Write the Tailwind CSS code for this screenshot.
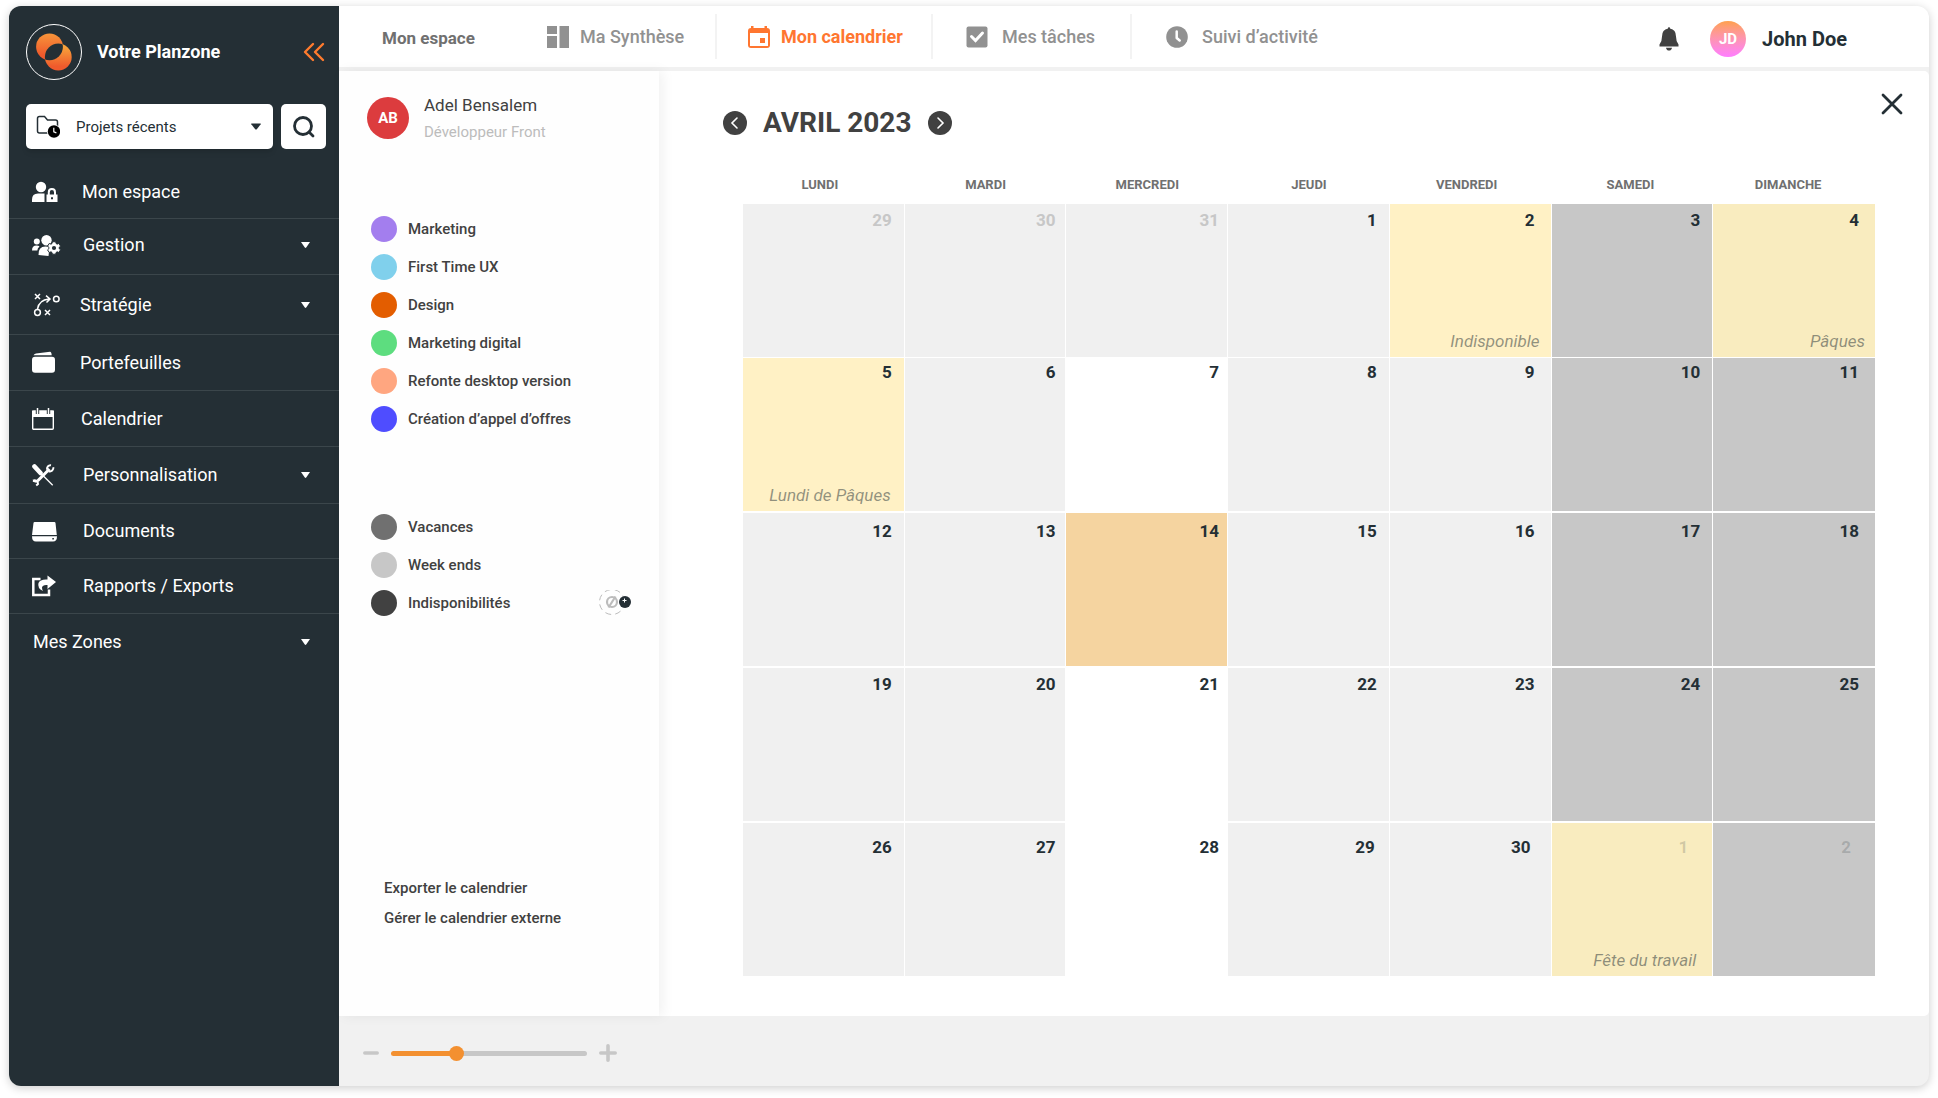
<!DOCTYPE html>
<html lang="fr">
<head>
<meta charset="utf-8">
<title>Mon calendrier – Planzone</title>
<script src="https://cdn.jsdelivr.net/npm/@tailwindcss/browser@4"></script>
</head>
<body class="bg-white font-['Roboto','Noto_Sans',sans-serif] text-[17px] leading-6 text-[#242f35]">
<div class="min-h-screen px-[9px] pt-[6px] pb-3 flex">
<div class="flex-1 flex rounded-xl overflow-hidden bg-[#f1f1f1] shadow-[0_2px_10px_rgba(0,0,0,0.2)]">

  <!-- Sidebar -->
  <aside class="w-[330px] shrink-0 bg-[#242f35] text-white text-[18px]">
    <div class="flex items-center pl-[17px] pr-[14px] pt-[18px]">
      <svg class="size-14" viewBox="0 0 56 56" role="img" aria-label="Planzone">
        <defs>
          <linearGradient id="g1" x1="0" y1="0" x2="0" y2="1"><stop offset="0" stop-color="#f7953a"/><stop offset=".8" stop-color="#ef5a2c"/></linearGradient>
          <linearGradient id="g2" x1="0" y1="0" x2="0" y2="1"><stop offset=".15" stop-color="#f7a03a"/><stop offset=".85" stop-color="#ef5a2c"/></linearGradient>
          <clipPath id="lens"><circle cx="23.5" cy="22.8" r="13.4"/></clipPath>
        </defs>
        <circle cx="28" cy="28" r="27.5" fill="none" stroke="#fff"/>
        <circle cx="23.5" cy="22.8" r="13.4" fill="url(#g1)"/>
        <circle cx="32.3" cy="33" r="13.4" fill="url(#g2)"/>
        <circle cx="32.3" cy="33" r="13.4" fill="#242f35" clip-path="url(#lens)"/>
      </svg>
      <span class="ml-[15px] font-bold flex-1">Votre Planzone</span>
      <button aria-label="Réduire le menu"><svg class="w-[22px] h-5" viewBox="0 0 22 20" fill="none" stroke="#ff7b2e" stroke-width="2.4" stroke-linecap="round" stroke-linejoin="round"><path d="M10 2 2 10l8 8M20 2l-8 8 8 8"/></svg></button>
    </div>
    <div class="flex gap-2 pl-[17px] pr-[13px] mt-6">
      <div class="flex-1 grid items-center bg-white rounded-[5px] h-[45px] shadow-md text-[#242f35]">
        <select aria-label="Projets" class="col-start-1 row-start-1 w-full h-full appearance-none bg-transparent pl-[50px] pr-8 text-[15px]"><option>Projets récents</option></select>
        <svg class="col-start-1 row-start-1 ml-[10px] w-6 h-6 pointer-events-none" viewBox="0 0 24 24"><path d="M1.500 3.500Q1.500 1.500 3.500 1.500H8.500L11.500 5H19.500Q21.500 5 21.500 7V18H3.500Q1.500 18 1.500 16Z" fill="none" stroke="#242f35" stroke-width="1.500"/><circle cx="18" cy="16.500" r="7" fill="#fff"/><circle cx="18" cy="16.500" r="6.200" fill="#000"/><path d="M17.800 12.700v4.200l2.600 1" fill="none" stroke="#fff" stroke-width="1.200"/></svg>
        <svg class="col-start-1 row-start-1 justify-self-end mr-3 w-[10px] h-[7px] pointer-events-none" viewBox="0 0 10 7"><path d="M.6.5h8.800q.7 0 .3.700L6 6q-1 1-2 0L.3 1.200Q-.1.500.6.500z" fill="#242f35"/></svg>
      </div>
      <button aria-label="Rechercher" class="size-[45px] bg-white rounded-[5px] grid place-items-center"><svg class="size-[22px]" viewBox="0 0 22 22" fill="none" stroke="#242f35" stroke-width="2.8" stroke-linecap="round"><circle cx="10" cy="10" r="8.500"/><path d="m16 16 4 4"/></svg></button>
    </div>
    <nav class="mt-4" aria-label="Menu principal">
      <a href="#" class="flex items-center h-[54px] pl-[23px] border-b border-[#3b464b]">
        <svg class="w-7 h-6 mr-[22px]" viewBox="0 0 28 24" fill="#fff"><circle cx="9" cy="7" r="5.200"/><path d="M0 22v-2.500Q0 13.500 6 13.500h6.500v8.500z"/><path fill-rule="evenodd" d="M14.500 14.500h1.300v-2.300a4.100 4.100 0 0 1 8.200 0v2.300h1.500v7.500h-11zM17.800 14.500h4.200v-2.300a2.100 2.100 0 0 0-4.200 0zM19 17.200v2h2v-2z"/></svg>Mon espace</a>
      <button class="flex items-center w-full h-14 pl-[23px] pr-[29px] pb-1 border-b border-[#3b464b]">
        <svg class="w-[29px] h-6 mr-[22px]" viewBox="0 0 29 24" fill="#fff"><circle cx="4.800" cy="8.500" r="3"/><circle cx="14.500" cy="7.200" r="5.200"/><path d="M0 17.500q0-5 4.500-5 2 0 3 1-2 1.500-2.200 4zM6.500 22q-.5-8.300 7-8.500l4 .5-1 9z"/><path d="M20.500 7.500h4l.5 2.200 1.200.7 2.200-.8 2 3.200-1.700 1.600v1.400l1.700 1.600-2 3.200-2.200-.8-1.200.8-.5 2.100h-4l-.5-2.100-1.200-.8-2.200.8-2-3.200 1.700-1.600v-1.400l-1.700-1.600 2-3.200 2.200.8 1.200-.7z" transform="translate(3.600 2.600) scale(.82)" stroke="#242f35" stroke-width="1.200"/><circle cx="22" cy="15" r="2.100" fill="#242f35"/></svg>Gestion
        <svg class="ml-auto w-[9px] h-[6px]" viewBox="0 0 9 6" fill="#fff"><path d="M0 0h9L5.200 5.500q-.7.800-1.400 0z"/></svg></button>
      <button class="flex items-center w-full h-[60px] pl-[23px] pr-[29px] border-b border-[#3b464b]">
        <svg class="w-7 h-6 mr-5" viewBox="0 0 28 24" fill="none" stroke="#fff" stroke-width="1.500"><path d="m3 1 5 5M8 1 3 6M13 17l5 5M18 17l-5 5M5.500 16Q7 7 17 6M14 2.700l4 3.300-3.500 3.500"/><circle cx="24.300" cy="6" r="2.800"/><circle cx="5.500" cy="19.500" r="2.900"/></svg>Stratégie
        <svg class="ml-auto w-[9px] h-[6px]" viewBox="0 0 9 6" fill="#fff"><path d="M0 0h9L5.200 5.500q-.7.800-1.400 0z"/></svg></button>
      <a href="#" class="flex items-center h-14 pl-[23px] border-b border-[#3b464b]">
        <svg class="w-7 h-6 mr-5" viewBox="0 0 28 24" fill="#fff"><rect x="0" y="5.700" width="23" height="16" rx="3"/><path d="M1.500 4.300Q2 3 4 2.600L18 .7q1.500 0 1.700 3.600z"/></svg>Portefeuilles</a>
      <a href="#" class="flex items-center h-14 pl-[23px] border-b border-[#3b464b]">
        <svg class="w-7 h-6 mr-[21px]" viewBox="0 0 28 24"><rect x=".7" y="4.200" width="20.600" height="18" rx="1" fill="none" stroke="#fff" stroke-width="1.400"/><path d="M0 3.500h22v6.500H0z" fill="#fff"/><path d="M5.500 1v6M16.500 1v6" stroke="#242f35" stroke-width="3.400"/><path d="M5.500 1v6M16.500 1v6" stroke="#fff" stroke-width="1.500"/></svg>Calendrier</a>
      <button class="flex items-center w-full h-[57px] pl-[23px] pr-[29px] border-b border-[#3b464b]">
        <svg class="w-7 h-6 mr-[23px]" viewBox="0 0 28 24" fill="none" stroke="#fff"><path d="m2.500 3.500 6 6.500" stroke-width="4.600" stroke-linecap="round"/><path d="m8 9.500 12.700 12.800" stroke-width="1.300"/><path d="m5.500 18 12-12" stroke-width="3"/><path d="M15.300 6.700a3.400 3.400 0 0 1 3.700-4.500M21.300 4.300a3.400 3.400 0 0 1-4.500 3.900M1 17.700a3.400 3.400 0 0 1 5 3.300l-1.800 1.500M1 17.700l3.500 1" stroke-width="2"/></svg>Personnalisation
        <svg class="ml-auto w-[9px] h-[6px]" viewBox="0 0 9 6" fill="#fff"><path d="M0 0h9L5.200 5.500q-.7.800-1.400 0z"/></svg></button>
      <a href="#" class="flex items-center h-[55px] pl-[23px] border-b border-[#3b464b]">
        <svg class="w-7 h-6 mr-[23px]" viewBox="0 0 28 24" fill="#fff"><path d="M1.500 4Q1.600 3 2.600 3H22.400q1 0 1.100 1l1.300 12H0z"/><path fill-rule="evenodd" d="M0 17.200h25q0 5.300-4 5.300H4q-4 0-4-5.300zM20.300 19v1.600h1.600V19z"/></svg>Documents</a>
      <a href="#" class="flex items-center h-[55px] pl-[23px] border-b border-[#3b464b]">
        <svg class="w-7 h-6 mr-[23px]" viewBox="0 0 28 24"><path d="M8.500 5H1.300v16H17v-5.500" fill="none" stroke="#fff" stroke-width="2.500"/><path d="M15.500 1.500 24 8l-8.500 7v-4q-5-.5-5.500 2.500 0 2 1 3.500-6-3-4.500-8 1.500-4 9-3.500z" fill="#fff"/></svg>Rapports / Exports</a>
      <button class="flex items-center w-full h-14 pl-6 pr-[29px]">Mes Zones
        <svg class="ml-auto w-[9px] h-[6px]" viewBox="0 0 9 6" fill="#fff"><path d="M0 0h9L5.200 5.500q-.7.800-1.400 0z"/></svg></button>
    </nav>
  </aside>

  <div class="flex-1 min-w-0 flex flex-col">
    <!-- Top bar -->
    <header class="h-[61px] bg-white flex items-center text-[#919191] font-medium mb-1">
      <span class="w-[208px] pl-[43px] pt-[2px] font-bold text-[#707070]">Mon espace</span>
      <nav class="flex items-center h-[45px] text-[18px]" aria-label="Mon espace">
        <a href="#" class="flex items-center gap-[11px] w-[170px] h-full border-r-2 border-[#f3f3f3]">
          <svg class="size-[22px]" viewBox="0 0 22 22" fill="#919191"><path d="M0 0h10v8H0zM0 10h10v12H0zM12.500 0H22v22h-9.500z"/></svg>Ma Synthèse</a>
        <a href="#" aria-current="page" class="flex items-center gap-[11px] w-[216px] pl-[31px] h-full border-r-2 border-[#f3f3f3] font-bold text-[#ff7630]">
          <svg class="size-[22px]" viewBox="0 0 22 22"><path fill-rule="evenodd" d="M3 0h2.500v2h11V0H19v2q3 0 3 3v14q0 3-3 3H3q-3 0-3-3V5q0-3 3-3zM2 7v13h18V7z" fill="#ff7630"/><path d="M12 12h5v5h-5z" fill="#ff7630"/></svg>Mon calendrier</a>
        <a href="#" class="flex items-center gap-[14px] w-[199px] pl-[33px] h-full border-r-2 border-[#f3f3f3]">
          <svg class="size-[22px]" viewBox="0 0 22 22"><rect width="21" height="21" x=".5" y=".5" rx="2" fill="#919191"/><path d="m5.500 10.500 4 4 7-7.500" fill="none" stroke="#fff" stroke-width="3" stroke-linecap="round"/></svg>Mes tâches</a>
        <a href="#" class="flex items-center gap-[14px] pl-[34px] h-full">
          <svg class="size-[22px]" viewBox="0 0 22 22"><circle cx="11" cy="11" r="10.800" fill="#919191"/><path d="M10.700 5.500v6.500l3 2.500" fill="none" stroke="#fff" stroke-width="2.500" stroke-linecap="round" stroke-linejoin="round"/></svg>Suivi d’activité</a>
      </nav>
      <div class="ml-auto flex items-center pr-[82px] pt-1">
        <button aria-label="Notifications"><svg class="w-5 h-6" viewBox="0 0 20 24" fill="#414141"><path d="M9 1.500Q9 0 10 0t1 1.500q6 1 6 8 0 5 2.500 8v2H.5v-2q2.500-3 2.500-8 0-7 6-8zM7 20.700h6q-.5 2.800-3 2.800t-3-2.800z"/></svg></button>
        <span class="ml-[31px] size-9 rounded-full grid place-items-center bg-linear-to-b from-[#ffa04a] to-[#ff7cff] text-white text-[15px] font-bold">JD</span>
        <span class="ml-4 text-[20px] font-bold text-[#242f35]">John Doe</span>
      </div>
    </header>

    <div class="flex-1 flex min-h-0">
      <!-- Legend panel -->
      <section class="relative z-10 w-[320px] shrink-0 bg-[#fefefe] shadow-[4px_0_12px_rgba(0,0,0,0.06)] text-[#414141] text-[15px] font-medium">
        <div class="flex gap-[15px] pl-7 pt-5">
          <span class="mt-[6px] size-[42px] rounded-full bg-[#dc3c3e] text-white grid place-items-center text-[15px] font-bold">AB</span>
          <div><p class="text-[17px] leading-7 font-normal">Adel Bensalem</p><p class="text-[15px] leading-[26px] font-normal text-[#bcbcbc]">Développeur Front</p></div>
        </div>
        <ul class="pl-8 mt-[71px] grid gap-3">
          <li class="flex items-center gap-[11px] leading-[26px]"><i class="size-[26px] rounded-full bg-[#a37eee]"></i>Marketing</li>
          <li class="flex items-center gap-[11px] leading-[26px]"><i class="size-[26px] rounded-full bg-[#80d0ec]"></i>First Time UX</li>
          <li class="flex items-center gap-[11px] leading-[26px]"><i class="size-[26px] rounded-full bg-[#e35d00]"></i>Design</li>
          <li class="flex items-center gap-[11px] leading-[26px]"><i class="size-[26px] rounded-full bg-[#5ddd7f]"></i>Marketing digital</li>
          <li class="flex items-center gap-[11px] leading-[26px]"><i class="size-[26px] rounded-full bg-[#ffa680]"></i>Refonte desktop version</li>
          <li class="flex items-center gap-[11px] leading-[26px]"><i class="size-[26px] rounded-full bg-[#4f4dff]"></i>Création d’appel d’offres</li>
        </ul>
        <ul class="pl-8 mt-[82px] grid gap-3">
          <li class="flex items-center gap-[11px] leading-[26px]"><i class="size-[26px] rounded-full bg-[#707070]"></i>Vacances</li>
          <li class="flex items-center gap-[11px] leading-[26px]"><i class="size-[26px] rounded-full bg-[#c7c7c7]"></i>Week ends</li>
          <li class="flex items-center gap-[11px] leading-[26px]"><i class="size-[26px] rounded-full bg-[#414141]"></i>Indisponibilités
            <button aria-label="Ajouter une indisponibilité" class="ml-auto mr-[27px]"><svg class="w-[34px] h-[26px]" viewBox="0 1 34 26"><circle cx="14" cy="13" r="12.500" fill="none" stroke="#bcbcbc" stroke-dasharray="6 4.200"/><circle cx="14" cy="13" r="5" fill="none" stroke="#bcbcbc" stroke-width="2.200"/><path d="m10.500 18.500 7-11" stroke="#bcbcbc" stroke-width="2.200"/><circle cx="27" cy="13" r="6" fill="#242f35"/><path d="M26.500 9.500v4M24.500 11.500h4" stroke="#fff"/></svg></button></li>
        </ul>
        <div class="pl-[45px] mt-[260px] grid gap-[6px] justify-items-start">
          <a href="#">Exporter le calendrier</a>
          <a href="#">Gérer le calendrier externe</a>
        </div>
      </section>

      <!-- Month view -->
      <main class="flex-1 min-w-0 bg-white rounded-r-[5px] pl-[84px] pr-[54px] pb-10">
        <div class="flex items-center justify-between -ml-5 -mr-[29px] pt-[21px]">
          <div class="flex items-center gap-4 pt-[13px] text-[#414141]">
            <button aria-label="Mois précédent"><svg class="size-6" viewBox="0 0 24 24"><circle cx="12" cy="12" r="12" fill="#414141"/><path d="m14 7-5 5 5 5" fill="none" stroke="#fff" stroke-width="1.600" stroke-linecap="round"/></svg></button>
            <h1 class="text-[28px] leading-9 font-bold">AVRIL 2023</h1>
            <button aria-label="Mois suivant"><svg class="size-6" viewBox="0 0 24 24"><circle cx="12" cy="12" r="12" fill="#414141"/><path d="m10 7 5 5-5 5" fill="none" stroke="#fff" stroke-width="1.600" stroke-linecap="round"/></svg></button>
          </div>
          <button aria-label="Fermer" class="self-start"><svg class="size-6" viewBox="0 0 24 24" stroke="#242f35" stroke-width="2.800" stroke-linecap="round"><path d="m3 3 18 18M21 3 3 21"/></svg></button>
        </div>
        <table class="mt-[34px] w-full table-fixed border-separate border-spacing-0">
          <thead class="text-[13px] text-[#707070]">
            <tr class="[&>th]:p-0 [&>th]:pb-[9px] [&>th]:font-bold [&>th]:leading-5">
              <th class="!pr-2">LUNDI</th><th>MARDI</th><th>MERCREDI</th><th>JEUDI</th><th class="!pr-2">VENDREDI</th><th class="!pr-1">SAMEDI</th><th class="!pr-3">DIMANCHE</th>
            </tr>
          </thead>
          <tbody id="days"></tbody>
        </table>
      </main>
    </div>

    <!-- Zoom control -->
    <footer class="h-[70px] shrink-0 flex items-center pl-6 pt-1 gap-3">
      <button aria-label="Réduire"><svg class="w-4 h-[18px]" viewBox="0 0 16 18"><path d="M1.800 9h12.400" stroke="#c7c7c7" stroke-width="3.500" stroke-linecap="round"/></svg></button>
      <input type="range" aria-label="Zoom" min="0" max="100" value="32" class="appearance-none w-[196px] h-[5px] rounded-full bg-linear-to-r from-[#f39030] from-33% to-[#c7c7c7] to-33% [&::-webkit-slider-thumb]:appearance-none [&::-webkit-slider-thumb]:size-[15px] [&::-webkit-slider-thumb]:rounded-full [&::-webkit-slider-thumb]:bg-[#f39030]">
      <button aria-label="Agrandir"><svg class="size-[18px]" viewBox="0 0 18 18"><path d="M1.800 9h14.400M9 1.800v14.400" stroke="#c7c7c7" stroke-width="3.600" stroke-linecap="round"/></svg></button>
    </footer>
  </div>
</div>
</div>
<script>
  // One entry per day: number, background kind, optional label and its right padding
  const bg = { d: 'bg-[#f0f0f0]', w: 'bg-[#c7c7c7]', y: 'bg-[#fff1c5]', h: 'bg-[#f9ecbf]', o: 'bg-[#f5d4a0]', n: 'bg-white' };
  const weeks = [
    [[29,'d'],[30,'d'],[31,'d'],[1,'d'],[2,'y','Indisponible','pr-[11px]'],[3,'w'],[4,'h','Pâques','pr-2.5']],
    [[5,'y','Lundi de Pâques','pr-[13px]'],[6,'d'],[7,'n'],[8,'d'],[9,'d'],[10,'w'],[11,'w']],
    [[12,'d'],[13,'d'],[14,'o'],[15,'d'],[16,'d'],[17,'w'],[18,'w']],
    [[19,'d'],[20,'d'],[21,'n'],[22,'d'],[23,'d'],[24,'w'],[25,'w']],
    [[26,'d'],[27,'d'],[28,'n'],[29,'d'],[30,'d'],[1,'h','Fête du travail','pr-4'],[2,'w']]
  ];
  const top_ = ['pt-1', 'pt-0.5', 'pt-1.5', 'pt-1', 'pt-3'];
  const right = ['pr-3', 'pr-2.5', 'pr-2', 'pr-3', 'pr-4', 'pr-3', 'pr-4'];
  const lastRight = ['pr-3', 'pr-2.5', 'pr-2', 'pr-3.5', 'pr-5', 'pr-6', 'pr-6'];
  document.getElementById('days').innerHTML = weeks.map((w, r) => '<tr>' + w.map(([n, k, label, lp], c) => {
    const other = (r === 0 && n > 20) || (r === 4 && n < 10);
    const ink = !other ? 'text-[#242f35]' : r === 0 ? 'text-[#c7c7c7]' : 'text-[#242f35]/20';
    const edge = (c < 6 ? 'border-r ' : '') + (r === 0 ? 'border-b' : r < 4 ? 'border-b-2' : '');
    return `<td class="p-0 bg-clip-padding border-white ${edge} ${bg[k]}"><div class="h-[153px] flex flex-col justify-between text-right ${top_[r]}">` +
      `<span class="font-bold ${ink} ${r === 4 ? lastRight[c] : right[c]}">${n}</span>` +
      (label ? `<span class="italic text-[#242f35]/50 pb-1 ${lp}">${label}</span>` : '') + '</div></td>';
  }).join('') + '</tr>').join('');
</script>
</body>
</html>
